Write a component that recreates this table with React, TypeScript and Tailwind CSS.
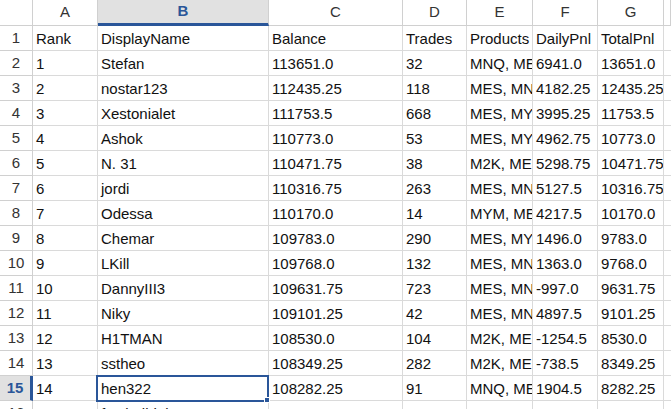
import React from 'react';

const cols = ['A', 'B', 'C', 'D', 'E', 'F', 'G', ''];

const rows: string[][] = [
  ['Rank', 'DisplayName', 'Balance', 'Trades', 'Products', 'DailyPnl', 'TotalPnl'],
  ['1', 'Stefan', '113651.0', '32', 'MNQ, MES', '6941.0', '13651.0'],
  ['2', 'nostar123', '112435.25', '118', 'MES, MNQ', '4182.25', '12435.25'],
  ['3', 'Xestonialet', '111753.5', '668', 'MES, MYM', '3995.25', '11753.5'],
  ['4', 'Ashok', '110773.0', '53', 'MES, MYM', '4962.75', '10773.0'],
  ['5', 'N. 31', '110471.75', '38', 'M2K, MES', '5298.75', '10471.75'],
  ['6', 'jordi', '110316.75', '263', 'MES, MNQ', '5127.5', '10316.75'],
  ['7', 'Odessa', '110170.0', '14', 'MYM, MES', '4217.5', '10170.0'],
  ['8', 'Chemar', '109783.0', '290', 'MES, MYM', '1496.0', '9783.0'],
  ['9', 'LKill', '109768.0', '132', 'MES, MNQ', '1363.0', '9768.0'],
  ['10', 'DannyIII3', '109631.75', '723', 'MES, MNQ', '-997.0', '9631.75'],
  ['11', 'Niky', '109101.25', '42', 'MES, MNQ', '4897.5', '9101.25'],
  ['12', 'H1TMAN', '108530.0', '104', 'M2K, MES', '-1254.5', '8530.0'],
  ['13', 'sstheo', '108349.25', '282', 'M2K, MES', '-738.5', '8349.25'],
  ['14', 'hen322', '108282.25', '91', 'MNQ, MES', '1904.5', '8282.25'],
  ['15', 'fastbullduke', '108101.0', '77', 'MES, MNQ', '1188.0', '8101.0'],
];

const grid = 'grid grid-cols-[33px_65px_171px_134px_64px_66px_65px_66px_1fr]';

export default function App() {
  return (
    <div className="relative w-[671px] h-[409px] overflow-hidden bg-white text-[15px] text-[#111] font-['Liberation_Sans',Arial,sans-serif]">
      {/* column headers */}
      <div className={`${grid} h-[26px]`}>
        <div className="border-r border-b border-[#d0d0d0] bg-white" />
        {cols.map((c) =>
          c === 'B' ? (
            <div key={c} className="flex items-center justify-center bg-[#e1e1e1] border-r border-[#d0d0d0] border-b-[3px] border-b-[#2a5699] font-bold text-[#2a5699]">
              {c}
            </div>
          ) : (
            <div key={c || 'x'} className="flex items-center justify-center border-r border-b border-[#d0d0d0] text-[#333]">
              {c}
            </div>
          )
        )}
      </div>

      {/* rows */}
      {rows.map((r, i) => {
        const n = i + 1;
        const sel = n === 15;
        return (
          <div key={n} className={`${grid} h-[25px]`}>
            {sel ? (
              <div className="flex items-center justify-center bg-[#e1e1e1] border-b border-[#d0d0d0] border-r-[3px] border-r-[#2a5699] font-bold text-[#2a5699]">
                {n}
              </div>
            ) : (
              <div className="flex items-center justify-center border-r border-b border-[#d0d0d0] text-[#333]">
                {n}
              </div>
            )}
            {r.map((v, j) => (
              <div key={j} className="flex items-center pl-[3px] pt-[2px] border-r border-b border-[#dadada] whitespace-nowrap overflow-hidden">
                {v}
              </div>
            ))}
            <div className="border-b border-[#dadada]" />
          </div>
        );
      })}

      {/* active cell B15 */}
      <div className="absolute left-[96px] top-[375px] w-[173px] h-[27px] border-2 border-[#2a5699] pointer-events-none" />
      <div className="absolute left-[264px] top-[397px] w-[6px] h-[6px] bg-[#2a5699] border border-white" />
    </div>
  );
}
